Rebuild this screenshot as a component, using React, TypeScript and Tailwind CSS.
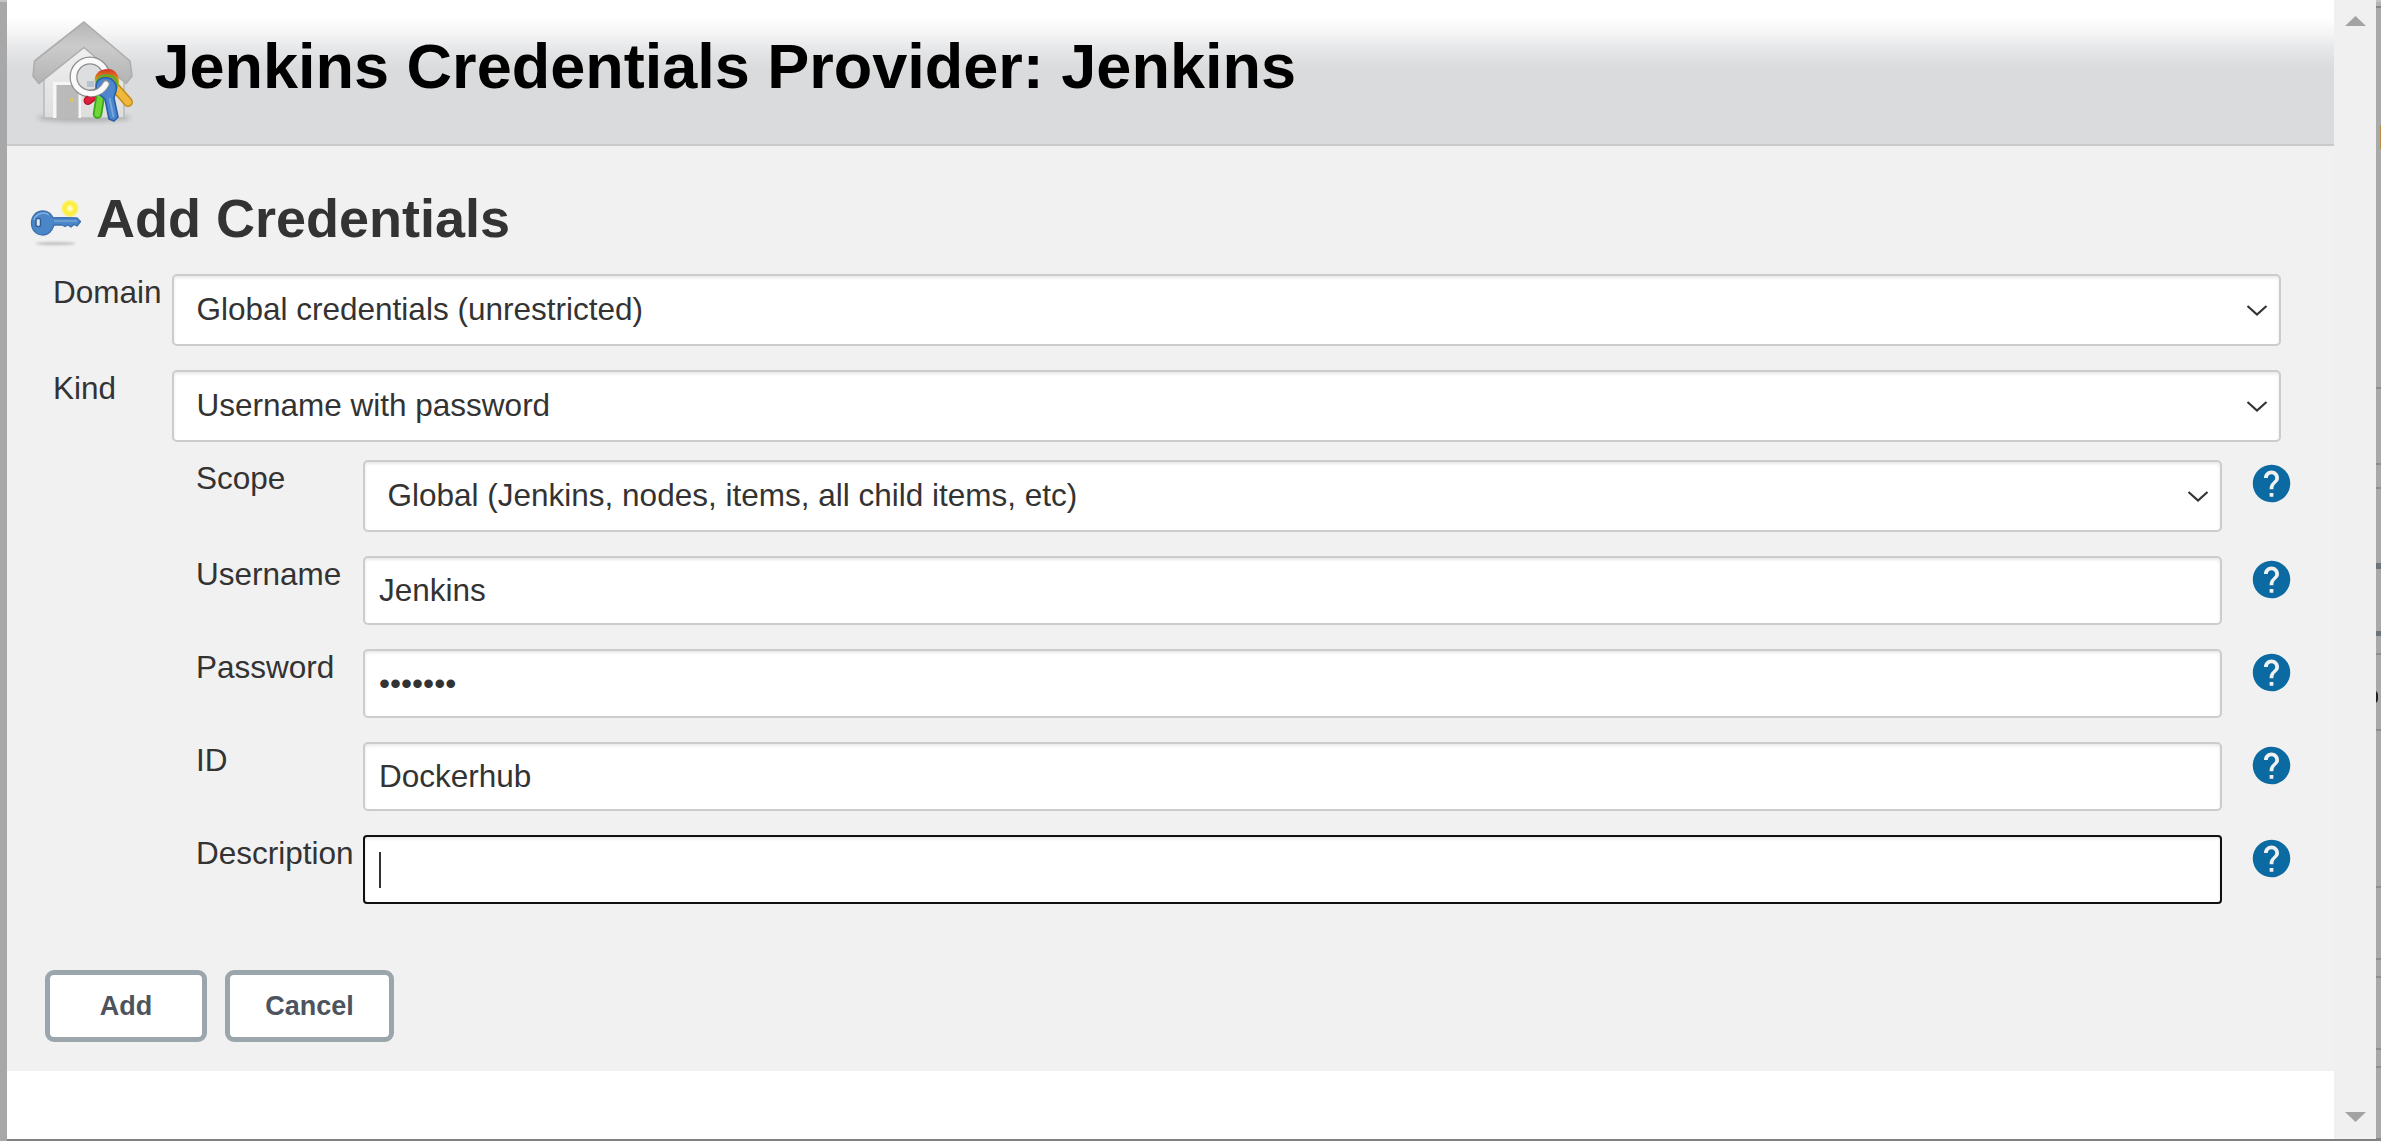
import React from "react";
import { MdHelp } from "react-icons/md";

function HouseIcon() {
  return (
    <svg className="block h-[108px] w-[108px] blur-[0.5px]" viewBox="28 18 108 108" fill="none">
      <defs>
        <linearGradient id="roof" x1="0" y1="0" x2="0" y2="1">
          <stop offset="0" stopColor="#b6b6b6" />
          <stop offset="0.4" stopColor="#cbcbcb" />
          <stop offset="1" stopColor="#b3b3b3" />
        </linearGradient>
        <linearGradient id="wall" x1="0" y1="0" x2="0" y2="1">
          <stop offset="0" stopColor="#f0f0f0" />
          <stop offset="1" stopColor="#dedede" />
        </linearGradient>
        <linearGradient id="rainbow" x1="0" y1="0" x2="0" y2="1">
          <stop offset="0" stopColor="#d8352a" />
          <stop offset="0.3" stopColor="#e0701f" />
          <stop offset="0.5" stopColor="#d9b52c" />
          <stop offset="1" stopColor="#3fae2a" />
        </linearGradient>
        <filter id="soft" x="-20%" y="-80%" width="140%" height="260%">
          <feGaussianBlur stdDeviation="2" />
        </filter>
      </defs>
      <ellipse cx="84" cy="118" rx="47" ry="4" fill="#8b8b8b" opacity="0.5" filter="url(#soft)" />
      <path d="M44 75 L84 44 L124 75 V118 H44 Z" fill="url(#wall)" stroke="#b9b9b9" strokeWidth="1.500" />
      <path d="M53 118 V82 H81 V118" fill="#f6f6f6" />
      <path d="M56.500 118 V85 H78.500 V118 Z" fill="#bababa" />
      <circle cx="72" cy="100" r="2" fill="#ddc54e" />
      <path d="M84 22 L130 61 L132 76 L126 83.500 L84 47.500 L39 83.500 L33 76 L34.500 61 Z" fill="url(#roof)" stroke="#adadad" strokeWidth="1.600" strokeLinejoin="round" />
      <circle cx="90" cy="77" r="13.500" fill="#dcdedf" />
      <circle cx="90" cy="77" r="16.500" stroke="#8f8f8f" strokeWidth="8" />
      <circle cx="90" cy="77" r="16.500" stroke="#fafafa" strokeWidth="5.500" />
      <path d="M87 81 h7 v6 h-7z" fill="#b6c3cf" />
      <path d="M92 97.500 L88 100.500" stroke="#b5142b" strokeWidth="9" strokeLinecap="round" />
      <path d="M92 97.500 L88 100.500" stroke="#df2038" strokeWidth="6" strokeLinecap="round" />
      <path d="M114 86 L128 102" stroke="#c18b18" strokeWidth="10" strokeLinecap="round" />
      <path d="M114 86 L128 102" stroke="#efb83a" strokeWidth="7" strokeLinecap="round" />
      <path d="M101 92 L97.500 114" stroke="#37a817" strokeWidth="9.500" strokeLinecap="round" />
      <path d="M101 92 L97.500 114" stroke="#70d536" strokeWidth="6" strokeLinecap="round" />
      <path d="M95 83 C93 75 99 69 108 69 C116 69 120 76 119 85 L115 93 L99 88 Z" fill="url(#rainbow)" />
      <path d="M97 82 C98 76 105 74 110 76 C116 77 118 82 116 87" stroke="#62ad25" strokeWidth="2.500" />
      <path d="M96 85 C97 79 103 77 108 78 C116 79.500 118 88 115 94 L114 98 L118 117 L114 121 L109 119 L105 99 C100 95 95 92 96 85 Z" fill="#4c86cf" stroke="#285fa8" strokeWidth="1.600" strokeLinejoin="round" />
      <path d="M109.500 98 L113.500 117" stroke="#79a9e2" strokeWidth="1.800" />
      <path d="M106 84 A17 17 0 0 1 91 93.500" stroke="#8f8f8f" strokeWidth="7.500" strokeLinecap="round" />
      <path d="M106 84 A17 17 0 0 1 89 93.500" stroke="#fafafa" strokeWidth="5.200" strokeLinecap="round" />
    </svg>
  );
}

function KeyIcon() {
  return (
    <svg className="block h-[54px] w-[54px] blur-[0.5px]" viewBox="29 197 54 54" fill="none">
      <defs>
        <filter id="key-shadow" x="-20%" y="-100%" width="140%" height="300%">
          <feGaussianBlur stdDeviation="1.300" />
        </filter>
        <radialGradient id="spark">
          <stop offset="0" stopColor="#fffff0" />
          <stop offset="0.3" stopColor="#fff685" />
          <stop offset="0.5" stopColor="#fbee37" />
          <stop offset="0.82" stopColor="#fbf05a" />
          <stop offset="1" stopColor="#fbf05a" stopOpacity="0" />
        </radialGradient>
      </defs>
      <ellipse cx="55.500" cy="243.500" rx="20" ry="1.800" fill="#a9a9a9" opacity="0.6" filter="url(#key-shadow)" />
      <circle cx="70" cy="208.500" r="9" fill="url(#spark)" />
      <path d="M43 211 C48 211 51 214 53 217.500 L77 218 L80.500 221.500 L77 226 L74 224.500 L71 227 L68 225 L65 226.500 L62 225 H54 C52 231 48 235 43 235 C36 235 31.500 230 31.500 223 C31.500 216 36 211 43 211 Z" fill="#4b86c8" stroke="#3c70ae" strokeWidth="1.300" strokeLinejoin="round" />
      <path d="M49 215 C45 211.500 36 213 34 220" stroke="#82afe0" strokeWidth="1.500" />
      <path d="M54 221 H77" stroke="#76a5da" strokeWidth="1.500" />
      <rect x="36" y="218.500" width="4.500" height="8" rx="1.500" fill="#e3e9ef" stroke="#315f99" strokeWidth="1.500" />
    </svg>
  );
}

function SelectBox({ value }: { value: string }) {
  return (
    <div className="flex h-[72px] flex-1 items-center justify-between rounded-[5px] border-2 border-[#cccccc] bg-white pr-[11px] pl-[22.5px] shadow-[inset_0_2px_3px_rgba(0,0,0,0.09)]">
      <span>{value}</span>
      <svg className="h-3.5 w-[22px]" viewBox="0 0 22 14" fill="none" stroke="#333333" strokeWidth="2.200">
        <path d="M1.500 3 L11 11.500 L20.500 3" />
      </svg>
    </div>
  );
}

function InputBox({ value, focused }: { value: string; focused?: boolean }) {
  return (
    <div
      className={
        focused
          ? "flex h-[69px] flex-1 items-center rounded-[4px] border-2 border-[#101010] bg-white pl-3.5 shadow-[inset_0_2px_3px_rgba(0,0,0,0.09)]"
          : "flex h-[69px] flex-1 items-center rounded-[5px] border-2 border-[#cccccc] bg-white pl-3.5 shadow-[inset_0_2px_3px_rgba(0,0,0,0.09)]"
      }
    >
      <span>{value}</span>
      {focused && <span className="h-9 w-0.5 bg-[#333333]" />}
    </div>
  );
}

function Field({ label, children }: { label: string; children: React.ReactNode }) {
  return (
    <div className="flex items-start">
      <div className="w-[167px] leading-9">{label}</div>
      {children}
      <MdHelp className="mt-px ml-[27px] size-[45px] shrink-0 text-[#0b6aa2]" />
    </div>
  );
}

/* Slices of the dimmed page that show beside the dialog: [height, colour] */
const edge: [number, string][] = [
  [2, "#c6c6c6"], [4, "#b4b4b4"], [2, "#858585"], [379, "#a9a9a9"],
  [2, "#8d8d8d"], [74, "#a9a9a9"], [2, "#8d8d8d"], [22, "#a9a9a9"],
  [2, "#8d8d8d"], [74, "#a9a9a9"], [6, "#6d7479"], [62, "#a9a9a9"],
  [5, "#6d7479"], [17, "#a9a9a9"], [2, "#8d8d8d"], [74, "#a9a9a9"],
  [2, "#8d8d8d"], [155, "#a9a9a9"], [2, "#8d8d8d"], [70, "#a9a9a9"],
  [2, "#8d8d8d"], [16, "#a9a9a9"], [2, "#8d8d8d"], [70, "#a9a9a9"],
  [2, "#8d8d8d"], [16, "#a9a9a9"], [2, "#8d8d8d"], [70, "#a9a9a9"],
  [3, "#858585"],
];

export default function App() {
  return (
    <div className="flex h-[1141px] w-[2381px] overflow-hidden bg-[#a9a9a9] font-['Liberation_Sans',Arial,sans-serif] text-[31.5px] text-[#333333]">
      <div className="w-[7px] shrink-0 border-t-2 border-[#c6c6c6] bg-[#a8a8a8]" />
      <div className="flex w-[2369px] shrink-0 border-b-2 border-[#808080]">
        <main className="flex w-[2327px] flex-col bg-white">
          <header className="flex h-[146px] items-start border-b-2 border-[#c9cacb] bg-[linear-gradient(to_bottom,#ffffff_18px,#f4f4f5_34px,#e5e6e8_50px,#dadbdd_69px)] pl-[21px]">
            <div className="pt-[18px]"><HouseIcon /></div>
            <h1 className="pt-[30px] pl-[18.5px] text-[63px] leading-[72px] font-bold whitespace-nowrap text-black">
              Jenkins Credentials Provider: Jenkins
            </h1>
          </header>
          <section className="flex h-[925px] flex-col bg-[#f1f1f1]">
            <div className="flex h-32 items-start pl-[22px]">
              <div className="pt-[51px]"><KeyIcon /></div>
              <h2 className="pt-[42px] pl-[13px] text-[54px] leading-[60px] font-bold">Add Credentials</h2>
            </div>
            <div className="flex flex-col gap-6 pr-[53px] pl-[45px]">
              <div className="flex items-start">
                <div className="w-[120px] pl-px leading-9">Domain</div>
                <SelectBox value="Global credentials (unrestricted)" />
              </div>
              <div className="flex items-start">
                <div className="w-[120px] pl-px leading-9">Kind</div>
                <SelectBox value="Username with password" />
              </div>
            </div>
            <div className="mt-[18px] flex flex-col gap-6 pr-[40px] pl-[189px]">
              <Field label="Scope"><SelectBox value="Global (Jenkins, nodes, items, all child items, etc)" /></Field>
              <Field label="Username"><InputBox value="Jenkins" /></Field>
              <Field label="Password"><InputBox value="•••••••" /></Field>
              <Field label="ID"><InputBox value="Dockerhub" /></Field>
              <Field label="Description"><InputBox value="" focused /></Field>
            </div>
            <div className="mt-[66px] flex gap-[18px] pl-[38px] text-[27px] font-bold text-[#4d545d]">
              <button className="h-[72px] w-[162px] rounded-[9px] border-[5px] border-[#9ba6ac] bg-white">Add</button>
              <button className="h-[72px] w-[169px] rounded-[9px] border-[5px] border-[#9ba6ac] bg-white">Cancel</button>
            </div>
          </section>
        </main>
        <aside className="flex w-[42px] flex-col items-center justify-between bg-[#f0f0f0] pt-4 pb-[17px]">
          <svg className="h-2.5 w-[21px]" viewBox="0 0 21 10" fill="#a3a3a3"><path d="M0 10 L10.500 0 L21 10 Z" /></svg>
          <svg className="h-2.5 w-[21px]" viewBox="0 0 21 10" fill="#a3a3a3"><path d="M0 0 L10.500 10 L21 0 Z" /></svg>
        </aside>
      </div>
      <div className="relative flex w-[5px] shrink-0 flex-col overflow-hidden">
        {edge.map(([height, color], i) => (
          <div key={i} className="shrink-0" style={{ height, backgroundColor: color }} />
        ))}
        <div className="absolute top-[125px] right-0 h-6 w-px bg-[#bb8a45]" />
        <div className="absolute top-[690px] -left-2 h-[14px] w-2.5 rounded-full border-[3px] border-[#1d2226]" />
      </div>
    </div>
  );
}
